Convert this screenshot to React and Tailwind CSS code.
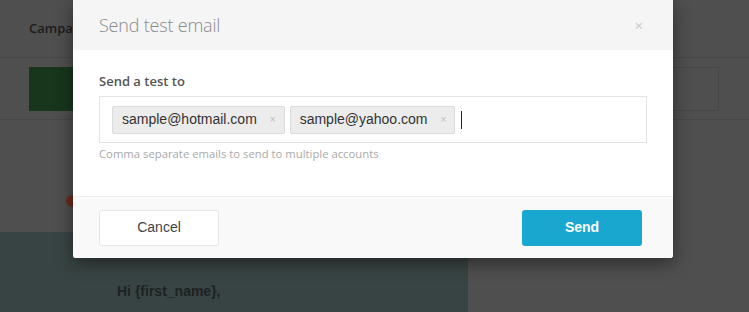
import React from "react";

export default function App() {
    const emails = ["sample@hotmail.com", "sample@yahoo.com"];

    return (
        <div className="relative w-[749px] h-[312px] overflow-hidden bg-[#4f4f4f] font-['Open_Sans',sans-serif]">
            {/* page behind the dimmed overlay */}
            <div className="h-[58px] border-b border-[#474747] flex items-center pl-[29px]">
                <span className="text-[13px] font-semibold text-[#1c1c1c]">Campaigns</span>
            </div>
            <div className="h-[62px] border-b border-[#474747] flex items-center pl-[29px] pr-[30px] justify-between">
                <div className="w-[120px] h-[44px] bg-[#17361c]"></div>
                <div className="w-[120px] h-[44px] border border-[#474747] bg-[#4e4f4e]"></div>
            </div>
            <div className="h-[112px] relative">
                <div className="absolute left-[66px] top-[75px] w-[12px] h-[12px] rounded-full bg-[#6b2a1a]"></div>
            </div>
            <div className="w-[468px] h-[80px] bg-[#384443] pt-[46px] pl-[117px]">
                <span className="font-['Liberation_Sans',sans-serif] text-[14px] font-bold text-[#1e2222]">Hi {"{first_name}"},</span>
            </div>

            {/* modal */}
            <div className="absolute left-[73px] top-0 w-[600px] bg-white rounded-b-[3px] shadow-[0_5px_18px_rgba(0,0,0,0.45)] overflow-hidden">
                <div className="h-[50px] bg-[#f5f5f5] flex items-center justify-between pl-[26px] pr-[30px]">
                    <h3 className="text-[18px] font-light text-[#8a8a8a] leading-none tracking-[-0.2px]">Send test email</h3>
                    <span className="text-[15px] text-[#c8c8c8] leading-none">×</span>
                </div>
                <div className="px-[26px] pt-[22px] pb-[34px]">
                    <label className="block text-[13px] font-semibold text-[#555] leading-[18px] mb-[6px]">Send a test to</label>
                    <div className="h-[47px] border border-[#e2e4e4] flex items-center gap-[5px] pl-[12px]">
                        {emails.map((e) => (
                            <div key={e} className="h-[28px] flex items-center bg-[#ececec] border border-[#dcdcdc] rounded-[2px] pl-[9px] pr-[8px] font-['Liberation_Sans',sans-serif] text-[14px] text-[#333]">
                                <span>{e}</span>
                                <span className="ml-[13px] text-[10px] text-[#bdbdbd]">×</span>
                            </div>
                        ))}
                        <div className="ml-[1px] w-px h-[18px] bg-[#222]"></div>
                    </div>
                    <p className="mt-[3px] text-[11.3px] text-[#aaa] leading-[16px]">Comma separate emails to send to multiple accounts</p>
                </div>
                <div className="h-[62px] bg-[#f9f9f9] border-t border-[#eee] flex items-center justify-between pl-[26px] pr-[31px]">
                    <button className="w-[120px] h-[36px] bg-white border border-[#e5e5e5] rounded-[3px] font-['Liberation_Sans',sans-serif] text-[14px] text-[#444]">Cancel</button>
                    <button className="w-[120px] h-[36px] bg-[#19a7cf] rounded-[3px] font-['Liberation_Sans',sans-serif] text-[14px] font-bold text-white">Send</button>
                </div>
            </div>
        </div>
    );
}
